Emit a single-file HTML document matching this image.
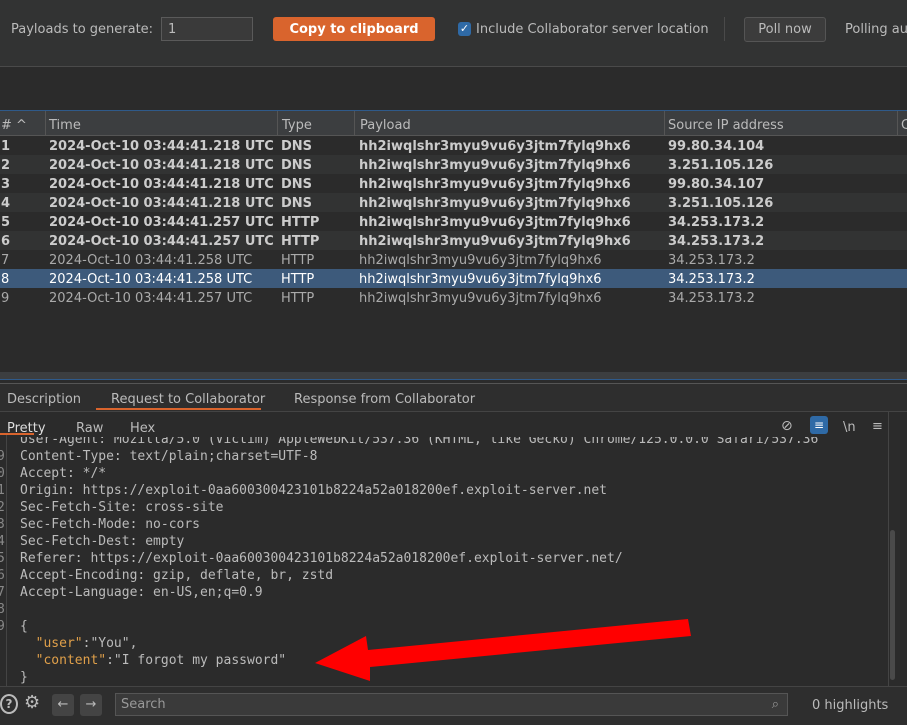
<!DOCTYPE html>
<html><head><style>
body{margin:0;width:907px;height:724px;background:#2b2b2b;font-family:"DejaVu Sans","Liberation Sans",sans-serif;color:#bbb;overflow:hidden;position:relative;font-size:13px}
.a{position:absolute}
.top{left:0;top:0;width:907px;height:66px;background:#323333;border-bottom:1px solid #4a4a4a}
.row{position:absolute;left:0;width:907px;height:19px;line-height:21px;font-size:13px}
.row span{position:absolute;white-space:nowrap}
.b{font-weight:bold;color:#ccc}
.code{font-family:"DejaVu Sans Mono","Liberation Mono",monospace;font-size:13px;line-height:17px;color:#bbb;white-space:pre}
</style></head><body>
<div class="a top"></div>
<div class="a" style="left:11px;top:22px;color:#bbb">Payloads to generate:</div>
<div class="a" style="left:161px;top:17px;border:1px solid #5a5a5a;background:#3a3a3a;line-height:22px;padding-left:6px;box-sizing:border-box;width:92px;height:24px;padding-top:1px">1</div>
<div class="a" style="left:273px;top:17px;width:162px;height:24px;background:#d9642d;border-radius:3px;color:#fff;font-weight:bold;text-align:center;line-height:25px">Copy to clipboard</div>
<div class="a" style="left:458px;top:22px;width:13px;height:14px;background:#2f6aa6;border-radius:3px;color:#fff;font-size:11px;line-height:14px;text-align:center">✓</div>
<div class="a" style="left:476px;top:22px">Include Collaborator server location</div>
<div class="a" style="left:724px;top:17px;width:1px;height:24px;background:#4a4a4a"></div>
<div class="a" style="left:744px;top:17px;width:80px;height:23px;border:1px solid #555;background:#3c3c3c;border-radius:3px;text-align:center;line-height:23px">Poll now</div>
<div class="a" style="left:845px;top:22px;white-space:nowrap;width:62px;overflow:hidden">Polling automatically</div>
<div class="a" style="left:0;top:110px;width:907px;height:1px;background:#2f5a8a"></div>
<div class="a" style="left:0;top:111px;width:907px;height:24px;background:#3c3e40;border-bottom:1px solid #555"></div>
<div class="row" style="top:115px;color:#bbb"><span style="left:1px">#&nbsp;^</span><span style="left:49px">Time</span><span style="left:282px">Type</span><span style="left:360px">Payload</span><span style="left:668px">Source IP address</span><span style="left:901px;width:6px;overflow:hidden">C</span></div>
<div class="a" style="left:45px;top:111px;width:1px;height:24px;background:#555"></div>
<div class="a" style="left:277px;top:111px;width:1px;height:24px;background:#555"></div>
<div class="a" style="left:354px;top:111px;width:1px;height:24px;background:#555"></div>
<div class="a" style="left:664px;top:111px;width:1px;height:24px;background:#555"></div>
<div class="a" style="left:897px;top:111px;width:1px;height:24px;background:#555"></div>
<div class="row b" style="top:136px;background:#2b2b2b"><span style="left:1px">1</span><span style="left:49px">2024-Oct-10 03:44:41.218 UTC</span><span style="left:281px">DNS</span><span style="left:359px">hh2iwqlshr3myu9vu6y3jtm7fylq9hx6</span><span style="left:668px">99.80.34.104</span></div>
<div class="row b" style="top:155px;background:#323333"><span style="left:1px">2</span><span style="left:49px">2024-Oct-10 03:44:41.218 UTC</span><span style="left:281px">DNS</span><span style="left:359px">hh2iwqlshr3myu9vu6y3jtm7fylq9hx6</span><span style="left:668px">3.251.105.126</span></div>
<div class="row b" style="top:174px;background:#2b2b2b"><span style="left:1px">3</span><span style="left:49px">2024-Oct-10 03:44:41.218 UTC</span><span style="left:281px">DNS</span><span style="left:359px">hh2iwqlshr3myu9vu6y3jtm7fylq9hx6</span><span style="left:668px">99.80.34.107</span></div>
<div class="row b" style="top:193px;background:#323333"><span style="left:1px">4</span><span style="left:49px">2024-Oct-10 03:44:41.218 UTC</span><span style="left:281px">DNS</span><span style="left:359px">hh2iwqlshr3myu9vu6y3jtm7fylq9hx6</span><span style="left:668px">3.251.105.126</span></div>
<div class="row b" style="top:212px;background:#2b2b2b"><span style="left:1px">5</span><span style="left:49px">2024-Oct-10 03:44:41.257 UTC</span><span style="left:281px">HTTP</span><span style="left:359px">hh2iwqlshr3myu9vu6y3jtm7fylq9hx6</span><span style="left:668px">34.253.173.2</span></div>
<div class="row b" style="top:231px;background:#323333"><span style="left:1px">6</span><span style="left:49px">2024-Oct-10 03:44:41.257 UTC</span><span style="left:281px">HTTP</span><span style="left:359px">hh2iwqlshr3myu9vu6y3jtm7fylq9hx6</span><span style="left:668px">34.253.173.2</span></div>
<div class="row" style="top:250px;background:#2b2b2b;color:#aaa"><span style="left:1px">7</span><span style="left:49px">2024-Oct-10 03:44:41.258 UTC</span><span style="left:281px">HTTP</span><span style="left:359px">hh2iwqlshr3myu9vu6y3jtm7fylq9hx6</span><span style="left:668px">34.253.173.2</span></div>
<div class="row" style="top:269px;background:#3d5a7b;color:#fff"><span style="left:1px">8</span><span style="left:49px">2024-Oct-10 03:44:41.258 UTC</span><span style="left:281px">HTTP</span><span style="left:359px">hh2iwqlshr3myu9vu6y3jtm7fylq9hx6</span><span style="left:668px">34.253.173.2</span></div>
<div class="row" style="top:288px;background:#2b2b2b;color:#aaa"><span style="left:1px">9</span><span style="left:49px">2024-Oct-10 03:44:41.257 UTC</span><span style="left:281px">HTTP</span><span style="left:359px">hh2iwqlshr3myu9vu6y3jtm7fylq9hx6</span><span style="left:668px">34.253.173.2</span></div>
<div class="a" style="left:0;top:372px;width:907px;height:7px;background:#3c3e40"></div>
<div class="a" style="left:0;top:379px;width:907px;height:1px;background:#2f5a8a"></div>
<div class="a" style="left:0;top:383px;width:907px;height:1px;background:#555"></div>
<div class="a" style="left:0;top:384px;width:907px;height:27px;background:#2e2e2e;border-bottom:1px solid #444"></div>
<div class="a" style="left:7px;top:392px">Description</div>
<div class="a" style="left:111px;top:392px">Request to Collaborator</div>
<div class="a" style="top:408px;height:2px;background:#d9642d;left:96px;width:165px"></div>
<div class="a" style="left:294px;top:392px">Response from Collaborator</div>
<div class="a" style="left:7px;top:421px;color:#ddd">Pretty</div>
<div class="a" style="left:0;top:433px;width:34px;height:2px;background:#d9642d"></div>
<div class="a" style="left:76px;top:421px">Raw</div>
<div class="a" style="left:130px;top:421px">Hex</div>
<div class="a" style="left:781px;top:418px;font-size:14px">⊘</div>
<div class="a" style="left:810px;top:416px;width:18px;height:18px;background:#2f6aa6;border-radius:3px;color:#fff;text-align:center;font-size:12px;line-height:18px">≡</div>
<div class="a" style="left:843px;top:420px">\n</div>
<div class="a" style="left:872px;top:419px">≡</div>
<div class="a" style="left:6px;top:435px;width:1px;height:251px;background:#444"></div>
<div class="a" style="left:888px;top:412px;width:1px;height:274px;background:#444"></div>
<div class="a" style="left:890px;top:530px;width:5px;height:150px;background:#4a4a4a;border-radius:3px"></div>
<div class="a code" style="left:20px;top:431px;clip-path:inset(6px 0 0 0)">User-Agent: Mozilla/5.0 (Victim) AppleWebKit/537.36 (KHTML, like Gecko) Chrome/125.0.0.0 Safari/537.36
Content-Type: text/plain;charset=UTF-8
Accept: */*
Origin: https://exploit-0aa600300423101b8224a52a018200ef.exploit-server.net
Sec-Fetch-Site: cross-site
Sec-Fetch-Mode: no-cors
Sec-Fetch-Dest: empty
Referer: https://exploit-0aa600300423101b8224a52a018200ef.exploit-server.net/
Accept-Encoding: gzip, deflate, br, zstd
Accept-Language: en-US,en;q=0.9

{
  <span style="color:#e0a04a">"user"</span>:"You",
  <span style="color:#e0a04a">"content"</span>:"I forgot my password"
}</div>
<div class="a code" style="left:-3px;top:448px;color:#888">9
0
1
2
3
4
5
6
7
8
9</div>
<svg class="a" style="left:310px;top:615px" width="385" height="70"><polygon points="5,48 56,21 58,35 378,4 381,21 60,52 60,66" fill="#f00"/></svg>
<div class="a" style="left:0;top:686px;width:907px;height:38px;background:#2e2e2e;border-top:1px solid #444"></div>
<div class="a" style="left:0;top:694px;border:2px solid #bbb;border-radius:50%;text-align:center;line-height:16px;font-weight:bold;font-size:12px;box-sizing:border-box;width:18px;height:20px">?</div>
<div class="a" style="left:24px;top:692px;font-size:18px">⚙</div>
<div class="a" style="left:52px;top:694px;width:22px;height:22px;background:#444;border-radius:3px;text-align:center;line-height:22px">←</div>
<div class="a" style="left:80px;top:694px;width:22px;height:22px;background:#444;border-radius:3px;text-align:center;line-height:22px">→</div>
<div class="a" style="left:115px;top:693px;width:673px;height:23px;border:1px solid #555;background:#3a3a3a;box-sizing:border-box;padding-left:5px;line-height:22px;color:#999">Search<span style="position:absolute;right:8px">⌕</span></div>
<div class="a" style="left:812px;top:698px">0 highlights</div>
</body></html>
